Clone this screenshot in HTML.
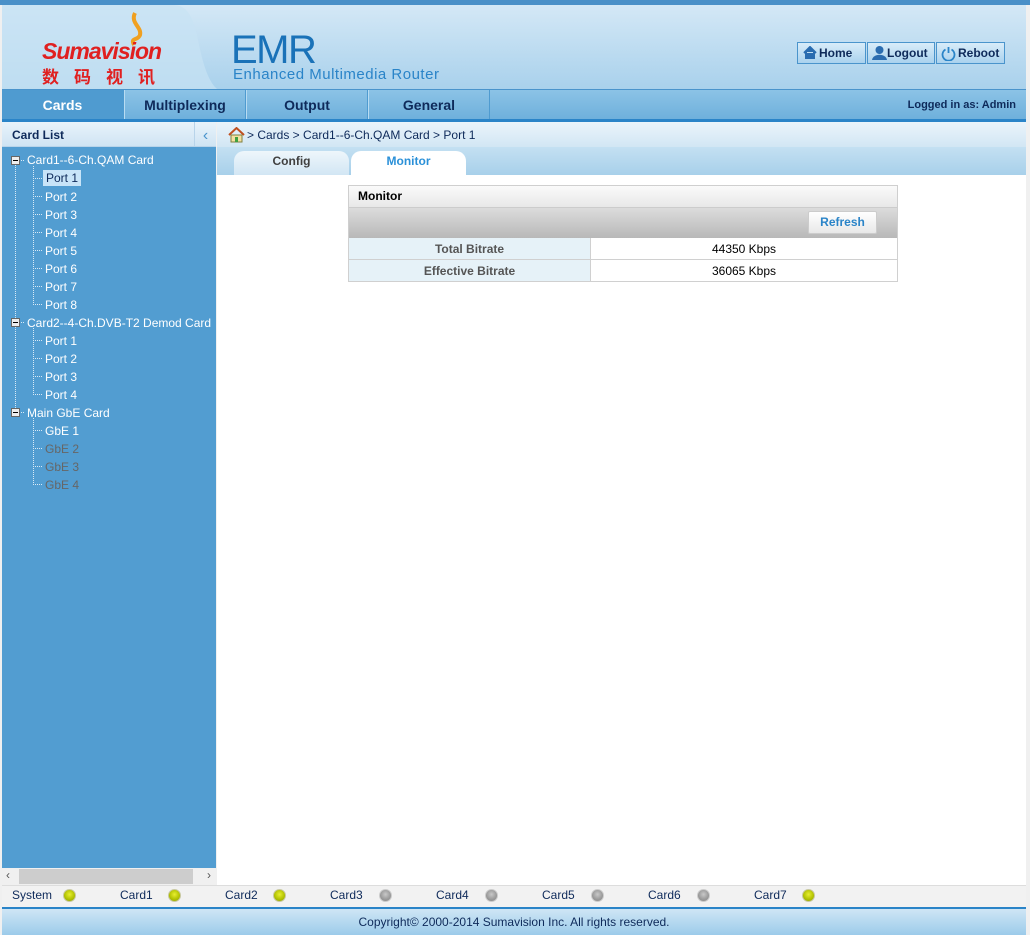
<!DOCTYPE html>
<html><head><meta charset="utf-8"><style>
*{margin:0;padding:0;box-sizing:border-box}
body{width:1030px;height:935px;overflow:hidden;font-family:"Liberation Sans",Arial,sans-serif;font-size:12px;background:#f0f0f0;position:relative}
.abs{position:absolute}
#top{left:0;top:0;width:1030px;height:5px;background:#4a90c8}
#hdr{left:2px;top:5px;width:1024px;height:84px;background:linear-gradient(#d4e8f6,#a9d1ec)}
#nav{left:2px;top:89px;width:1024px;height:33px;background:linear-gradient(#8cc3e6,#6fb0dc);border-top:1px solid #4a94cc;border-bottom:3px solid #2a84c8}
.tab{position:absolute;top:0;height:29px;line-height:31px;text-align:center;font-weight:bold;font-size:14px;color:#0e2a5a;border-right:1px solid #4f9bd0;border-left:1px solid #b8dcf2}
.btn{position:absolute;top:42px;height:22px;border:1px solid #4a94cc;background:linear-gradient(#d8ecf9,#aad2ee);font-weight:bold;color:#0e2a5a;line-height:20px;font-size:12px}
#left{left:2px;top:122px;width:214px;height:763px;background:#529dd1}
.tree div{position:absolute;color:#fff;font-size:12px;white-space:nowrap}
.led{position:absolute;top:889px;width:13px;height:13px;border-radius:50%}
.y{background:radial-gradient(circle at 50% 40%,#e8ef30,#b0c000 60%,#8a9a20);border:1px solid #c8c8a0}
.g{background:radial-gradient(circle at 50% 40%,#c8c8c8,#999 60%,#888);border:1px solid #ccc}
.sl{position:absolute;top:888px;font-size:12px;color:#0e2a5a}
td{border:1px solid #d0d0d0;height:22px;text-align:center;font-size:12px}
</style></head><body>
<div id="top" class="abs"></div>
<div id="hdr" class="abs">
<svg class="abs" style="left:0;top:0" width="220" height="84"><path d="M0 0 H170 C185 0 190 10 195 30 C200 55 205 75 215 84 H0Z" fill="#c8e2f4" opacity=".7"/><path d="M133 8 C128 18 140 22 138 30 C136 36 128 32 132 40" stroke="#f0a020" stroke-width="4" fill="none"/></svg>
<div class="abs" style="left:40px;top:33px;font:italic bold 23px 'Liberation Sans';color:#e02020;letter-spacing:-1px">Sumavision</div>
<div class="abs" style="left:40px;top:58px;font:bold 17px 'Noto Sans CJK SC',sans-serif;color:#e02020;letter-spacing:15px">数码视讯</div>
<div class="abs" style="left:229px;top:23px;font:40px 'Liberation Sans';color:#1a72b8;letter-spacing:-1.5px">EMR</div>
<div class="abs" style="left:231px;top:61px;font:15px 'Liberation Sans';color:#2a84c8;letter-spacing:.5px">Enhanced Multimedia Router</div>
</div>
<div class="btn" style="left:797px;width:69px;padding-left:21px">Home<svg class="abs" style="left:5px;top:3px" width="14" height="13"><path d="M1 7 L7 1 L13 7 M3 6 V12 H11 V6" stroke="#2a6cb0" stroke-width="2" fill="#2a6cb0"/></svg></div>
<div class="btn" style="left:867px;width:68px;padding-left:19px">Logout<svg class="abs" style="left:4px;top:2px" width="15" height="15"><circle cx="7.5" cy="5" r="4" fill="#2a6cb0"/><path d="M0 15 C1 8 14 8 15 15Z" fill="#2a6cb0"/></svg></div>
<div class="btn" style="left:936px;width:69px;padding-left:21px">Reboot<svg class="abs" style="left:4px;top:3px" width="15" height="15"><path d="M4.5 3.5 A6 6 0 1 0 10.5 3.5" stroke="#2a84c8" stroke-width="1.8" fill="none"/><path d="M7.5 1 V7" stroke="#2a84c8" stroke-width="1.8"/></svg></div>
<div id="nav" class="abs">
<div class="tab" style="left:0;width:122px;background:#4f9bd0;color:#fff;border-left:none">Cards</div>
<div class="tab" style="left:122px;width:122px">Multiplexing</div>
<div class="tab" style="left:244px;width:122px">Output</div>
<div class="tab" style="left:366px;width:122px">General</div>
<div class="abs" style="right:10px;top:9px;font-weight:bold;font-size:11px;color:#0e2a5a">Logged in as: Admin</div>
</div>
<div id="left" class="abs">
<div class="abs" style="left:0;top:0;width:214px;height:25px;background:linear-gradient(#e8f3fb,#cfe4f3);border-bottom:1px solid #b8d4ea;font-weight:bold;color:#0e2a5a;line-height:27px;padding-left:10px">Card List<div class="abs" style="left:192px;top:0;width:22px;height:25px;border-left:1px solid #b8d4ea;color:#4a94cc;text-align:center;font-size:16px;font-weight:normal">&lsaquo;</div></div>
<div class="tree">
<svg class="abs" style="left:0;top:0" width="60" height="380"><g stroke="#d8eaf6" stroke-dasharray="1,1" fill="none"><path d="M13.5 43 V290"/><path d="M31.5 44 V182 M31.5 206 V272 M31.5 296 V362"/><path d="M17 38.5 H23 M17 200.5 H23 M17 290.5 H23"/><path d="M31 56.5 H40 M31 74.5 H40 M31 92.5 H40 M31 110.5 H40 M31 128.5 H40 M31 146.5 H40 M31 164.5 H40 M31 182.5 H40 M31 218.5 H40 M31 236.5 H40 M31 254.5 H40 M31 272.5 H40 M31 308.5 H40 M31 326.5 H40 M31 344.5 H40 M31 362.5 H40"/></g><g fill="#eee" stroke="#666"><rect x="9.5" y="34.5" width="8" height="8"/><rect x="9.5" y="196.5" width="8" height="8"/><rect x="9.5" y="286.5" width="8" height="8"/></g><path d="M11 38.5H16M11 200.5H16M11 290.5H16" stroke="#000"/></svg>
<div style="left:25px;top:31px">Card1--6-Ch.QAM Card</div>
<div style="left:41px;top:48px;background:#c8e4f8;color:#0e2a5a;padding:0 3px;height:16px;line-height:16px">Port 1</div>
<div style="left:43px;top:68px">Port 2</div><div style="left:43px;top:86px">Port 3</div><div style="left:43px;top:104px">Port 4</div><div style="left:43px;top:122px">Port 5</div><div style="left:43px;top:140px">Port 6</div><div style="left:43px;top:158px">Port 7</div><div style="left:43px;top:176px">Port 8</div>
<div style="left:25px;top:194px">Card2--4-Ch.DVB-T2 Demod Card</div>
<div style="left:43px;top:212px">Port 1</div><div style="left:43px;top:230px">Port 2</div><div style="left:43px;top:248px">Port 3</div><div style="left:43px;top:266px">Port 4</div>
<div style="left:25px;top:284px">Main GbE Card</div>
<div style="left:43px;top:302px">GbE 1</div><div style="left:43px;top:320px;color:#666">GbE 2</div><div style="left:43px;top:338px;color:#666">GbE 3</div><div style="left:43px;top:356px;color:#666">GbE 4</div>
</div>
<div class="abs" style="left:0;top:746px;width:214px;height:17px;background:#f0f0f0"><div class="abs" style="left:17px;top:1px;width:174px;height:15px;background:#cdcdcd"></div><span class="abs" style="left:4px;top:0;color:#555">&lsaquo;</span><span class="abs" style="right:5px;top:0;color:#555">&rsaquo;</span></div>
</div>
<div class="abs" style="left:217px;top:122px;width:809px;height:763px;background:#fff">
<div class="abs" style="left:0;top:0;width:809px;height:25px;background:linear-gradient(#eaf4fb,#d2e6f4);line-height:27px;padding-left:30px;color:#0e2a5a">&gt; Cards &gt; Card1--6-Ch.QAM Card &gt; Port 1
<svg class="abs" style="left:11px;top:5px" width="17" height="16"><path d="M1 8 L8.5 1 L16 8" stroke="#c05020" stroke-width="2" fill="none"/><rect x="3" y="8" width="11" height="7" fill="#f4e0a0" stroke="#808040"/><rect x="7" y="10" width="3" height="5" fill="#40a040"/></svg></div>
<div class="abs" style="left:0;top:25px;width:809px;height:28px;background:linear-gradient(#c4e0f2,#a8d0ea)"></div>
<div class="abs" style="left:17px;top:29px;width:115px;height:24px;background:linear-gradient(#eef6fb,#d2e6f4);border-radius:10px 10px 0 0;text-align:center;line-height:21px;font-weight:bold;color:#404040">Config</div>
<div class="abs" style="left:134px;top:29px;width:115px;height:24px;background:#fff;border-radius:10px 10px 0 0;text-align:center;line-height:21px;font-weight:bold;color:#2a90d8">Monitor</div>
<div class="abs" style="left:131px;top:63px;width:550px;height:97px;border:1px solid #cfcfcf">
<div style="height:22px;background:linear-gradient(#fafafa,#e8e8e8);border-bottom:1px solid #ccc;font-weight:bold;line-height:21px;padding-left:9px;color:#000">Monitor</div>
<div style="height:30px;background:linear-gradient(#dcdcdc,#b8b8b8);position:relative"><div class="abs" style="left:459px;top:3px;width:69px;height:23px;background:linear-gradient(#fff,#e8e8e8);border:1px solid #ccc;border-radius:2px;text-align:center;line-height:21px;font-weight:bold;color:#2a84c8">Refresh</div></div>
<table style="border-collapse:collapse;width:550px;margin-left:-1px;margin-top:-1px"><tr><td style="width:242px;background:#e6f2f8;font-weight:bold;color:#555">Total Bitrate</td><td>44350 Kbps</td></tr><tr><td style="background:#e6f2f8;font-weight:bold;color:#555">Effective Bitrate</td><td>36065 Kbps</td></tr></table>
</div>
</div>
<div class="abs" style="left:2px;top:885px;width:1024px;height:22px;background:#f2f2f2;border-top:1px solid #ddd"></div>
<span class="sl" style="left:12px">System</span><div class="led y" style="left:63px"></div>
<span class="sl" style="left:120px">Card1</span><div class="led y" style="left:168px"></div>
<span class="sl" style="left:225px">Card2</span><div class="led y" style="left:273px"></div>
<span class="sl" style="left:330px">Card3</span><div class="led g" style="left:379px"></div>
<span class="sl" style="left:436px">Card4</span><div class="led g" style="left:485px"></div>
<span class="sl" style="left:542px">Card5</span><div class="led g" style="left:591px"></div>
<span class="sl" style="left:648px">Card6</span><div class="led g" style="left:697px"></div>
<span class="sl" style="left:754px">Card7</span><div class="led y" style="left:802px"></div>
<div class="abs" style="left:2px;top:907px;width:1024px;height:28px;background:linear-gradient(#cfe6f5,#9ccbea);border-top:2px solid #2a84c8;text-align:center;line-height:26px;color:#0e2a5a">Copyright© 2000-2014 Sumavision Inc. All rights reserved.</div>
</body></html>
